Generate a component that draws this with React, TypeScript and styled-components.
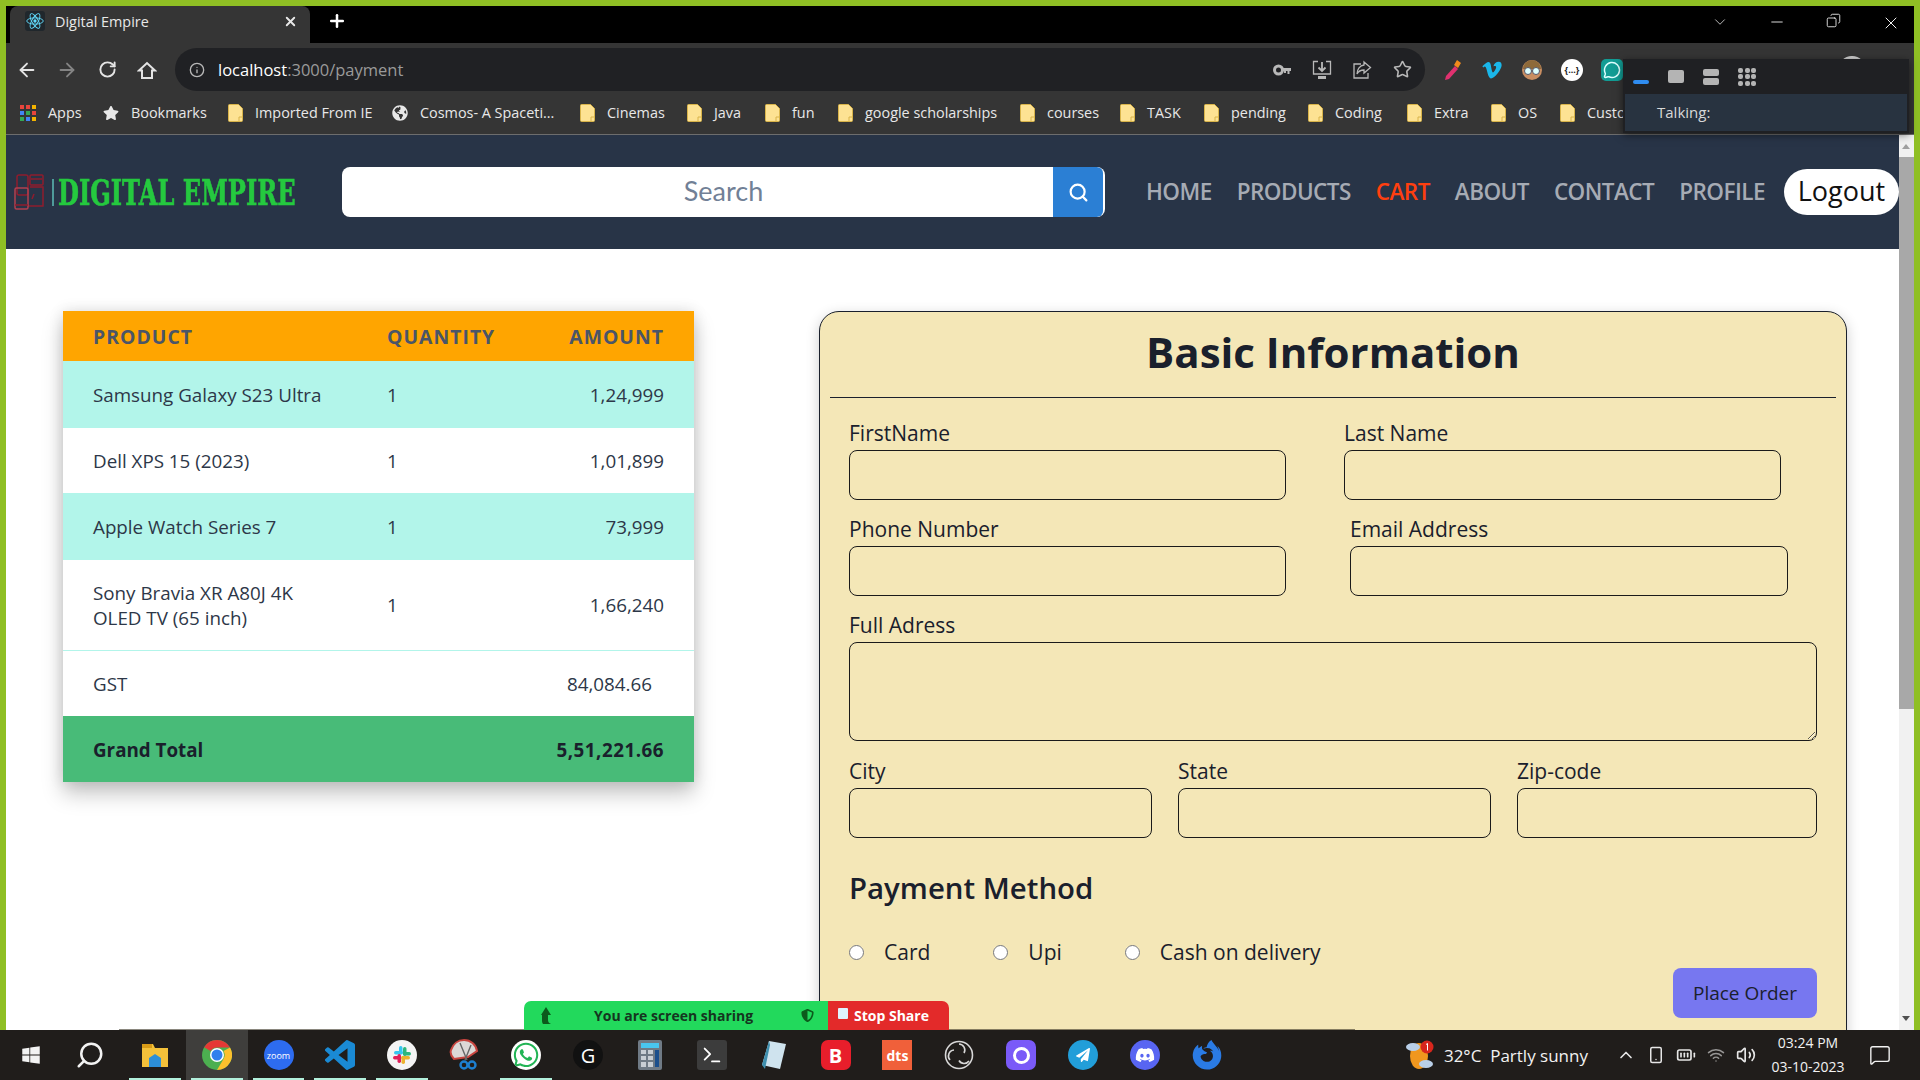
import React from 'react';
import styled, { createGlobalStyle } from 'styled-components';
import {
    ArrowLeft,
    ArrowRight,
    BatteryFull,
    ChevronDown,
    ChevronUp,
    Copy,
    Info,
    MessageCircle,
    MessageSquare,
    Minus,
    Plus,
    RotateCw,
    Search,
    Smartphone,
    Star,
    Terminal,
    Volume2,
    Wifi,
    X,
} from 'lucide-react';
import {
    FaDiscord,
    FaFirefoxBrowser,
    FaGlobeAmericas,
    FaPaperPlane,
    FaShieldAlt,
    FaStar,
    FaVimeoV,
    FaWhatsapp,
    FaWindows,
} from 'react-icons/fa';

const sans = `'Open Sans', 'Noto Sans', sans-serif`;

const GlobalStyle = createGlobalStyle`
    html, body {
        margin: 0;
        overflow: hidden;
        font-family: ${sans};
    }
    * {
        box-sizing: border-box;
    }
`;

const Screen = styled.div`
    position: relative;
    display: flex;
    flex-direction: column;
    width: 100vw;
    height: 100vh;
    overflow: hidden;
    background: #8fbf24;
`;

const Desktop = styled.div`
    display: flex;
    flex: 1;
    flex-direction: column;
    min-height: 0;
    padding: 6px 6px 0;
`;

const TabStrip = styled.div`
    display: flex;
    align-items: flex-end;
    height: 37px;
    padding-left: 4px;
    background: #000;
    color: #e8e8e8;
`;

const Tab = styled.div`
    display: flex;
    align-items: center;
    width: 300px;
    height: 37px;
    padding: 0 12px 7px 15px;
    background: #353535;
    border-radius: 8px 8px 0 0;
    font-size: 14.4px;
`;

const Favicon = styled.span`
    display: flex;
    align-items: center;
    justify-content: center;
    width: 20px;
    height: 20px;
    margin-right: 10px;
    background: #20272c;
    border-radius: 3px;
`;

const TabTitle = styled.span`
    flex: 1;
`;

const NewTab = styled.span`
    display: flex;
    margin: 0 0 6px 17px;
    padding-bottom: 6px;
    color: #fff;
`;

const WindowControls = styled.div`
    display: flex;
    margin-left: auto;
    padding-bottom: 10px;
    margin-right: -5px;
    color: #f0f0f0;
`;

const WindowButton = styled.span`
    display: flex;
    justify-content: center;
    width: 57px;
`;

const Toolbar = styled.div`
    display: flex;
    align-items: center;
    height: 48px;
    padding: 5px 0 0 1px;
    background: #353535;
    color: #e4e4e4;
`;

const ToolButton = styled.span<{ $dim?: boolean }>`
    display: flex;
    align-items: center;
    justify-content: center;
    flex: none;
    width: 40px;
    opacity: ${(p) => (p.$dim ? 0.45 : 1)};
`;

const AddressPill = styled.div`
    display: flex;
    align-items: center;
    width: 1250px;
    height: 43px;
    margin-left: 8px;
    padding: 0 3px 0 14px;
    background: #202124;
    border-radius: 22px;
    color: #b8b8b8;
`;

const AddressText = styled.span`
    flex: 1;
    margin-left: 13px;
    font-size: 16.5px;
    color: #9a9a9a;
    b {
        font-weight: 400;
        color: #fff;
    }
`;

const Extensions = styled.div`
    display: flex;
    margin-left: 7px;
`;

const ExtensionBadge = styled.span<{ $bg: string; $radius?: string }>`
    display: flex;
    align-items: center;
    justify-content: center;
    width: 22px;
    height: 22px;
    background: ${(p) => p.$bg};
    border-radius: ${(p) => p.$radius || '50%'};
    color: #222;
    font-size: 9px;
    font-weight: 700;
`;

const ProfileRing = styled.span`
    width: 28px;
    height: 28px;
    border: 3px solid #d0d0d0;
    border-radius: 50%;
`;

const BookmarkBar = styled.div`
    display: flex;
    align-items: center;
    height: 44px;
    padding-left: 14px;
    background: #353535;
    border-bottom: 1px solid #6d6d6d;
    color: #e8e8e8;
    font-size: 14.4px;
    white-space: nowrap;
    overflow: hidden;
`;

const Bookmark = styled.span<{ $w: number }>`
    display: flex;
    align-items: center;
    flex: none;
    gap: 12px;
    width: ${(p) => p.$w}px;
`;

const AppsGrid = styled.span`
    display: grid;
    grid-template-columns: repeat(3, 4px);
    gap: 2px;
`;

const AppsDot = styled.i<{ $c: string }>`
    width: 4px;
    height: 4px;
    background: ${(p) => p.$c};
`;

const Viewport = styled.div`
    display: flex;
    flex: 1;
    min-height: 0;
`;

const Page = styled.div`
    flex: 1;
    min-width: 0;
    overflow: hidden;
    background: #fff;
`;

const Scrollbar = styled.div`
    display: flex;
    flex-direction: column;
    flex: none;
    width: 15px;
    background: #f1f1f1;
`;

const ScrollArrow = styled.span<{ $down?: boolean }>`
    display: block;
    width: 0;
    height: 0;
    margin: ${(p) => (p.$down ? 'auto 3px 9px' : '9px 3px 8px')};
    border-left: 4.5px solid transparent;
    border-right: 4.5px solid transparent;
    border-bottom: ${(p) => (p.$down ? '0' : '5px solid #a0a0a0')};
    border-top: ${(p) => (p.$down ? '5px solid #505050' : '0')};
`;

const ScrollThumb = styled.div`
    height: 552px;
    background: #a8a8a8;
`;

const Nav = styled.header`
    display: flex;
    align-items: center;
    height: 114px;
    background: #283447;
`;

const Logo = styled.div`
    display: flex;
    align-items: center;
    flex: none;
    width: 336px;
    padding: 0 0 0 8px;
    filter: blur(0.5px);
    svg {
        flex: none;
    }
`;

const LogoRule = styled.span`
    flex: none;
    width: 2px;
    height: 27px;
    margin: 0 4px 0 8px;
    background: #4f9a9a;
`;

const LogoText = styled.span`
    display: inline-block;
    flex: none;
    width: 234px;
    font-family: 'DejaVu Serif', serif;
    font-size: 36px;
    font-weight: 700;
    color: #25c93f;
    white-space: nowrap;
    -webkit-text-stroke: 0.7px #25c93f;
    transform: scaleX(0.67);
    transform-origin: left center;
`;

const SearchBox = styled.div`
    display: flex;
    flex: none;
    width: 763px;
    height: 50px;
    background: #fff;
    border-radius: 8px;
    overflow: hidden;
`;

const SearchField = styled.input`
    flex: 1;
    min-width: 0;
    padding: 0 0 3px 52px;
    border: 0;
    outline: 0;
    background: none;
    font-family: 'Lato', sans-serif;
    font-size: 27px;
    text-align: center;
    &::placeholder {
        color: #718096;
        opacity: 1;
    }
`;

const SearchButton = styled.button`
    display: flex;
    align-items: center;
    justify-content: center;
    width: 50px;
    margin-right: 2px;
    padding: 0;
    border: 0;
    background: #2b7fd4;
    border-radius: 0 6px 6px 0;
    color: #fff;
`;

const NavLinks = styled.nav`
    display: flex;
    align-items: center;
    flex: 1;
    gap: 25px;
    margin-left: 41px;
    padding-bottom: 2px;
`;

const NavLink = styled.a<{ $active?: boolean }>`
    font-size: 22.5px;
    font-weight: 600;
    letter-spacing: -0.55px;
    color: ${(p) => (p.$active ? '#ff3f0f' : '#a6abb4')};
    white-space: nowrap;
`;

const LogoutButton = styled.button`
    flex: none;
    width: 115px;
    height: 46px;
    padding: 0 0 3px;
    border: 0;
    background: #fff;
    border-radius: 23px;
    font-family: ${sans};
    font-size: 27px;
    color: #111;
`;

const Main = styled.main`
    display: flex;
    align-items: flex-start;
    justify-content: space-between;
    padding: 62px 52px 0 57px;
`;

const OrderTable = styled.table`
    flex: none;
    width: 631px;
    border-collapse: collapse;
    table-layout: fixed;
    box-shadow: 0 12px 20px rgba(0, 0, 0, 0.22), 0 0 14px rgba(0, 0, 0, 0.12);
    font-size: 18.8px;
    color: #2d3748;
`;

const HeadRow = styled.tr`
    height: 50px;
    background: #ffa500;
`;

const HeadCell = styled.th<{ $right?: boolean; $w?: number }>`
    width: ${(p) => (p.$w ? `${p.$w}px` : 'auto')};
    padding: 0 ${(p) => (p.$right ? '30px' : '0')} 0 ${(p) => (p.$right ? '0' : '30px')};
    font-size: 19.4px;
    font-weight: 700;
    letter-spacing: 1px;
    text-align: ${(p) => (p.$right ? 'right' : 'left')};
    color: #4a5568;
`;

const BodyRow = styled.tr<{ $h: number; $tint?: boolean; $rule?: boolean }>`
    height: ${(p) => p.$h}px;
    background: ${(p) => (p.$tint ? '#b2f5ea' : '#fff')};
    border-bottom: ${(p) => (p.$rule ? '1px solid #b2f5ea' : '0')};
`;

const TotalRow = styled.tr`
    height: 66px;
    background: #48bb78;
    font-weight: 700;
    color: #1a202c;
    td:last-child {
        letter-spacing: 0.5px;
    }
`;

const Cell = styled.td<{ $right?: boolean; $inset?: number }>`
    padding: 2px ${(p) => (p.$right ? `${p.$inset || 30}px` : '0')} 0 30px;
    line-height: 25px;
    white-space: pre-line;
    text-align: ${(p) => (p.$right ? 'right' : 'left')};
`;

const FormCard = styled.form`
    flex: none;
    width: 1028px;
    padding: 0 10px 60px;
    background: #f4e7b7;
    border: 1px solid #1a202c;
    border-radius: 20px;
    box-shadow: 0 4px 14px rgba(0, 0, 0, 0.2);
    color: #1a202c;
`;

const CardTitle = styled.h1`
    margin: 0;
    padding: 6px 0 11px;
    border-bottom: 1px solid #1a202c;
    font-size: 42px;
    font-weight: 700;
    line-height: 68px;
    text-align: center;
`;

const FormBody = styled.div`
    padding: 23px 19px 0;
`;

const FieldRow = styled.div<{ $cols: string; $gap?: number; $mb?: number }>`
    display: grid;
    grid-template-columns: ${(p) => p.$cols};
    column-gap: ${(p) => p.$gap || 0}px;
    margin-bottom: ${(p) => (p.$mb === undefined ? 17 : p.$mb)}px;
`;

const FieldLabel = styled.label`
    display: block;
    margin-bottom: 5px;
    font-size: 21px;
    line-height: 24px;
`;

const TextInput = styled.input`
    display: block;
    width: 100%;
    height: 50px;
    border: 1px solid #1a1a1a;
    border-radius: 8px;
    background: none;
    outline: 0;
`;

const TextArea = styled.textarea`
    display: block;
    width: 100%;
    height: 99px;
    border: 1px solid #1a1a1a;
    border-radius: 8px;
    background: none;
    outline: 0;
`;

const SectionTitle = styled.h2`
    margin: 30px 0 0;
    font-size: 29.4px;
    font-weight: 600;
    line-height: 40px;
`;

const RadioRow = styled.div`
    display: flex;
    gap: 63px;
    margin-top: 32px;
`;

const RadioLabel = styled.label`
    display: flex;
    align-items: center;
    gap: 20px;
    font-size: 21px;
    line-height: 24px;
`;

const RadioInput = styled.input`
    width: 15px;
    height: 15px;
    margin: 0;
`;

const PlaceOrder = styled.button`
    display: block;
    width: 144px;
    height: 50px;
    margin: 4px 0 0 auto;
    padding: 0;
    border: 0;
    border-radius: 8px;
    background: #7777f0;
    font-family: ${sans};
    font-size: 19px;
    color: #1a202c;
`;

const Taskbar = styled.footer`
    position: relative;
    display: flex;
    align-items: center;
    flex: none;
    height: 50px;
    background: #201d1b;
    color: #f2f2f2;
    &::before {
        content: '';
        position: absolute;
        left: 119px;
        top: -1px;
        width: 1236px;
        height: 1px;
        background: rgba(60, 55, 40, 0.6);
    }
`;

const TaskSlot = styled.span<{ $open?: boolean; $active?: boolean }>`
    position: relative;
    display: flex;
    align-items: center;
    justify-content: center;
    flex: none;
    width: 61.9px;
    height: 50px;
    background: ${(p) => (p.$active ? '#3f3e3c' : 'transparent')};
    &::after {
        content: '';
        display: ${(p) => (p.$open ? 'block' : 'none')};
        position: absolute;
        left: 5px;
        right: 5px;
        bottom: 0;
        height: 2px;
        background: #b2f0dc;
    }
`;

const Disc = styled.span<{ $bg: string; $color?: string; $radius?: string; $w?: number }>`
    display: flex;
    align-items: center;
    justify-content: center;
    width: ${(p) => p.$w || 30}px;
    height: 30px;
    background: ${(p) => p.$bg};
    border-radius: ${(p) => p.$radius || '50%'};
    color: ${(p) => p.$color || '#fff'};
    font-size: 20px;
    font-weight: 700;
    overflow: hidden;
`;

const DiscLabel = styled.span<{ $size: number; $weight?: number }>`
    font-size: ${(p) => p.$size}px;
    font-weight: ${(p) => p.$weight || 400};
`;

const Ring = styled.span`
    width: 17px;
    height: 17px;
    border: 3px solid #fff;
    border-radius: 50%;
`;

const Tray = styled.div`
    display: flex;
    align-items: center;
    margin-left: auto;
    padding-right: 12px;
`;

const Weather = styled.span`
    display: flex;
    align-items: center;
    font-size: 17px;
    white-space: nowrap;
`;

const TrayIcons = styled.span`
    display: flex;
    align-items: center;
    gap: 11px;
    margin-left: 28px;
    color: #e6e6e6;
`;

const Clock = styled.span`
    width: 88px;
    margin-left: 8px;
    font-size: 14px;
    line-height: 24px;
    text-align: center;
`;

const Notification = styled.span`
    display: flex;
    justify-content: center;
    width: 56px;
`;

const ZoomWidget = styled.aside`
    position: absolute;
    top: 59px;
    left: 1623px;
    width: 286px;
    height: 74px;
    padding: 0 2px 2px;
    background: #1f2023;
    box-shadow: 0 2px 8px rgba(0, 0, 0, 0.5);
`;

const ZoomViews = styled.div`
    display: flex;
    align-items: center;
    gap: 19px;
    height: 35px;
    padding-left: 8px;
`;

const ViewGlyph = styled.span<{ $c?: string; $w: number; $h: number }>`
    display: block;
    width: ${(p) => p.$w}px;
    height: ${(p) => p.$h}px;
    margin-top: ${(p) => (p.$c ? '10px' : '0')};
    background: ${(p) => p.$c || '#b4b4b4'};
    border-radius: 2px;
`;

const ViewStack = styled.span`
    display: grid;
    gap: 2px;
`;

const ViewGrid = styled.span`
    display: grid;
    grid-template-columns: repeat(3, 5px);
    gap: 1.5px;
`;

const TalkingBar = styled.div`
    height: 37px;
    padding-left: 32px;
    background: #283340;
    font-size: 15px;
    line-height: 37px;
    color: #d8d8d8;
`;

const ShareBar = styled.div`
    position: absolute;
    left: 524px;
    top: 1001px;
    display: flex;
    width: 425px;
    height: 29px;
    border-radius: 7px 7px 0 0;
    overflow: hidden;
    font-size: 14px;
    font-weight: 700;
`;

const ShareNotice = styled.div`
    display: flex;
    align-items: center;
    width: 304px;
    padding: 0 14px 0 16px;
    background: #22d95c;
    color: #15351f;
`;

const ShareText = styled.span`
    flex: 1;
    padding-left: 42px;
    white-space: nowrap;
`;

const StopShare = styled.div`
    display: flex;
    align-items: center;
    flex: 1;
    gap: 6px;
    padding-left: 10px;
    background: #e32a2a;
    color: #fff;
`;

const StopGlyph = styled.span`
    width: 10px;
    height: 11px;
    margin-bottom: 5px;
    background: #dff4ff;
    border-radius: 1px;
`;

const FolderIcon = () => (
    <svg width="15" height="18" viewBox="0 0 15 18">
        <path d="M.5 1.5a1 1 0 0 1 1-1h9l4 4v12a1 1 0 0 1-1 1h-12a1 1 0 0 1-1-1z" fill="#fde293" stroke="#d9b44a" />
        <path d="M11 17v-4h3.5" fill="none" stroke="#d9b44a" />
    </svg>
);

const ReactIcon = () => (
    <svg width="18" height="18" viewBox="-12 -12 24 24" fill="none" stroke="#61dafb" strokeWidth="1.2">
        <circle r="2.2" fill="#61dafb" stroke="none" />
        <ellipse rx="11" ry="4.2" />
        <ellipse rx="11" ry="4.2" transform="rotate(60)" />
        <ellipse rx="11" ry="4.2" transform="rotate(120)" />
    </svg>
);

const DevicesLogo = () => (
    <svg width="30" height="36" viewBox="0 0 30 36" fill="none" stroke="#8e1c2e" strokeWidth="1.5">
        <rect x="3" y="1" width="11" height="20" rx="2" />
        <rect x="16" y="1" width="13" height="10" rx="1" />
        <path d="M17 5h11M16 13h13v19H14" />
        <rect x="1" y="14" width="13" height="21" rx="1.5" stroke="#b04050" />
        <path d="M1 31h13M20 20l-2 5" />
    </svg>
);

const HomeOutline = () => (
    <svg width="20" height="20" viewBox="0 0 20 20" fill="none" stroke="currentColor" strokeWidth="2">
        <path d="M2 10.500L10 3l8 7.500h-3V18H5v-7.500z" />
    </svg>
);

const KeyIcon = () => (
    <svg width="18" height="12" viewBox="0 0 18 12" fill="currentColor">
        <path fillRule="evenodd" d="M5.500.500a5.500 5.500 0 1 0 0 11 5.500 5.500 0 0 0 0-11zm0 3a2.500 2.500 0 1 1 0 5 2.500 2.500 0 0 1 0-5z" />
        <path d="M10 4h8v3h-1.500v3h-2V7H13v2h-2V7h-1z" />
    </svg>
);

const InstallIcon = () => (
    <svg width="20" height="20" viewBox="0 0 20 20" fill="none" stroke="currentColor" strokeWidth="1.3">
        <path d="M6 1.500H1.500V14h17V1.500H14" />
        <path d="M10 2v9M6.500 7.500L10 11l3.500-3.500" strokeWidth="1.800" />
        <path d="M6 17.500h8" strokeWidth="3" />
    </svg>
);

const ShareBoxIcon = () => (
    <svg width="20" height="20" viewBox="0 0 20 20" fill="none" stroke="currentColor" strokeWidth="1.3">
        <path d="M9 4H2v14h14v-5" />
        <path d="M12 2l6.500 5.500L12 13v-3C9 10 6.500 11 5 14c0-5 3-8.500 7-9z" />
    </svg>
);

const DropperIcon = () => (
    <svg width="20" height="22" viewBox="0 0 20 22">
        <path d="M13 7l3 3-9 10-4 1 1-4z" fill="#e0316f" />
        <path d="M12 6l3-5 4 3-3 5z" fill="#f28a1c" />
    </svg>
);

const FaceIcon = () => (
    <svg width="22" height="22" viewBox="0 0 22 22">
        <circle cx="11" cy="11" r="10" fill="#c98e62" />
        <path d="M2 10a9 9 0 0 1 18 0z" fill="#8e6a3a" />
        <circle cx="7" cy="12" r="3.5" fill="#dff" stroke="#556" />
        <circle cx="15" cy="12" r="3.5" fill="#dff" stroke="#556" />
    </svg>
);

const FilesIcon = () => (
    <svg width="28" height="28" viewBox="0 0 28 28">
        <path d="M1 3h11l2 4h13v19H1z" fill="#f3c13a" />
        <path d="M1 3h10v4H1z" fill="#d89b17" />
        <path d="M8 26v-9l6-4 6 4v9z" fill="#2c8fd8" />
    </svg>
);

const ChromeIcon = () => (
    <svg width="30" height="30" viewBox="0 0 30 30">
        <circle cx="15" cy="15" r="15" fill="#4caf50" />
        <path d="M15 0a15 15 0 0 1 13 7.5H15A7.5 7.5 0 0 0 8.5 11L2.2 7.3A15 15 0 0 1 15 0z" fill="#e53935" />
        <path d="M28 7.5A15 15 0 0 1 15 30l6.5-11A7.5 7.5 0 0 0 21.500 11z" fill="#fbc02d" />
        <circle cx="15" cy="15" r="7" fill="#fff" />
        <circle cx="15" cy="15" r="5.500" fill="#2f80ed" />
    </svg>
);

const VsCodeIcon = () => (
    <svg width="30" height="30" viewBox="0 0 24 24" fill="#1a8ad4">
        <path d="M23.15 2.587L18.21.21a1.494 1.494 0 0 0-1.705.29l-9.46 8.63-4.12-3.128a.999.999 0 0 0-1.276.057L.327 7.261A1 1 0 0 0 .326 8.74L3.899 12 .326 15.26a1 1 0 0 0 .001 1.479L1.65 17.94a.999.999 0 0 0 1.276.057l4.12-3.128 9.46 8.63a1.492 1.492 0 0 0 1.704.29l4.942-2.377A1.5 1.5 0 0 0 24 20.06V3.939a1.5 1.5 0 0 0-.85-1.352zm-5.146 14.861L10.826 12l7.178-5.448v10.896z" />
    </svg>
);

const SlackIcon = () => (
    <svg width="30" height="30" viewBox="0 0 30 30">
        <circle cx="15" cy="15" r="15" fill="#f4f4f4" />
        <rect x="7" y="11" width="9" height="3.500" rx="1.700" fill="#36c5f0" />
        <rect x="12" y="6" width="3.500" height="8" rx="1.700" fill="#36c5f0" />
        <rect x="16" y="7" width="3.500" height="9" rx="1.700" fill="#2eb67d" />
        <rect x="16" y="12" width="8" height="3.500" rx="1.700" fill="#2eb67d" />
        <rect x="14" y="16" width="9" height="3.500" rx="1.700" fill="#ecb22e" />
        <rect x="14.500" y="16" width="3.500" height="8" rx="1.700" fill="#ecb22e" />
        <rect x="10.500" y="14" width="3.500" height="9" rx="1.700" fill="#e01e5a" />
        <rect x="6" y="16" width="8" height="3.500" rx="1.700" fill="#e01e5a" />
    </svg>
);

const CalculatorIcon = () => (
    <svg width="24" height="30" viewBox="0 0 24 30">
        <rect width="24" height="30" rx="2" fill="#6f7a85" />
        <rect x="3" y="3" width="18" height="5" fill="#49c6ef" />
        <rect x="3" y="10" width="5" height="4" fill="#c8ced4" />
        <rect x="10" y="10" width="5" height="4" fill="#c8ced4" />
        <rect x="3" y="16" width="5" height="4" fill="#c8ced4" />
        <rect x="10" y="16" width="5" height="4" fill="#c8ced4" />
        <rect x="3" y="22" width="5" height="5" fill="#c8ced4" />
        <rect x="10" y="22" width="5" height="5" fill="#c8ced4" />
        <rect x="17" y="10" width="4" height="17" fill="#1c4f8c" />
    </svg>
);

const NotepadIcon = () => (
    <svg width="26" height="30" viewBox="0 0 26 30">
        <path d="M8 1l17 3-6 25-18-4z" fill="#cfe3ee" />
        <path d="M8 1L1 25l3 4 5-24z" fill="#3f8fae" />
    </svg>
);

const ObsIcon = () => (
    <svg width="30" height="30" viewBox="0 0 30 30" fill="none" stroke="#d8d8d8" strokeWidth="1.6">
        <circle cx="15" cy="15" r="13.500" />
        <path d="M15 4a6 6 0 0 1 5 9M25 21a6 6 0 0 1-10-.5M6 20a6 6 0 0 1 4-10" />
    </svg>
);

const SnipIcon = () => (
    <svg width="30" height="32" viewBox="0 0 30 32" fill="none">
        <path d="M15 1a13 13 0 0 1 13 11l-9 6-14 2C2 17 1 14 2 11 4 5 9 1 15 1z" fill="#dcd8d6" stroke="#c8453f" strokeWidth="2" />
        <path d="M11 4l7 17M22 6l-6 15" stroke="#666" strokeWidth="1.400" />
        <circle cx="15" cy="26" r="3.500" stroke="#1d7fd0" strokeWidth="2.400" />
        <circle cx="23" cy="26" r="3.500" stroke="#1d7fd0" strokeWidth="2.400" />
    </svg>
);

const SharePointer = () => (
    <svg width="12" height="18" viewBox="0 0 12 18" fill="#0c5a1c">
        <path d="M6 0l5 8H8v5c0 2 1 3 3 4H3c-1-1-1-3-1-4V8H1z" />
    </svg>
);

const WeatherIcon = () => (
    <svg width="30" height="30" viewBox="0 0 30 30">
        <ellipse cx="14" cy="16" rx="9" ry="13" fill="#f0971e" />
        <ellipse cx="8" cy="7" rx="7" ry="4" fill="#b9cfe8" />
        <ellipse cx="21" cy="24" rx="7" ry="4" fill="#b9cfe8" />
        <circle cx="22" cy="7" r="6.500" fill="#d8261c" />
        <path d="M21 4.500l1.500-1v7" stroke="#fff" fill="none" />
    </svg>
);

const bookmarks = [
    { label: 'Bookmarks', w: 125, icon: <FaStar size={16} /> },
    { label: 'Imported From IE', w: 164, icon: <FolderIcon /> },
    { label: 'Cosmos- A Spaceti...', w: 188, icon: <FaGlobeAmericas size={16} /> },
    { label: 'Cinemas', w: 107, icon: <FolderIcon /> },
    { label: 'Java', w: 78, icon: <FolderIcon /> },
    { label: 'fun', w: 73, icon: <FolderIcon /> },
    { label: 'google scholarships', w: 182, icon: <FolderIcon /> },
    { label: 'courses', w: 100, icon: <FolderIcon /> },
    { label: 'TASK', w: 84, icon: <FolderIcon /> },
    { label: 'pending', w: 104, icon: <FolderIcon /> },
    { label: 'Coding', w: 99, icon: <FolderIcon /> },
    { label: 'Extra', w: 84, icon: <FolderIcon /> },
    { label: 'OS', w: 69, icon: <FolderIcon /> },
    { label: 'Custo', w: 70, icon: <FolderIcon /> },
];

const appDots = ['#e8453c', '#e8453c', '#f4b400', '#4285f4', '#34a853', '#e8453c', '#34a853', '#4285f4', '#f4b400'];

const navItems = ['HOME', 'PRODUCTS', 'CART', 'ABOUT', 'CONTACT', 'PROFILE'];

const orderLines = [
    { name: 'Samsung Galaxy S23 Ultra', amount: '1,24,999', h: 67, tint: true },
    { name: 'Dell XPS 15 (2023)', amount: '1,01,899', h: 65 },
    { name: 'Apple Watch Series 7', amount: '73,999', h: 67, tint: true },
    { name: 'Sony Bravia XR A80J 4K\nOLED TV (65 inch)', amount: '1,66,240', h: 90, rule: true },
];

const taskItems: { icon: React.ReactNode; open?: boolean; active?: boolean }[] = [
    { icon: <FaWindows size={20} /> },
    { icon: <Search size={30} strokeWidth={2} style={{ transform: 'scaleX(-1) translateX(3px)' }} /> },
    { icon: <FilesIcon />, open: true },
    { icon: <ChromeIcon />, open: true, active: true },
    { icon: <Disc $bg="#2d6cf0"><DiscLabel $size={9}>zoom</DiscLabel></Disc>, open: true },
    { icon: <VsCodeIcon />, open: true },
    { icon: <SlackIcon />, open: true },
    { icon: <SnipIcon /> },
    { icon: <Disc $bg="#fff" $color="#22b455"><FaWhatsapp size={28} /></Disc>, open: true },
    { icon: <Disc $bg="#111"><DiscLabel $size={20} $weight={400}>G</DiscLabel></Disc> },
    { icon: <CalculatorIcon /> },
    { icon: <Disc $bg="#3c3c3c" $radius="3px"><Terminal size={22} /></Disc> },
    { icon: <NotepadIcon /> },
    { icon: <Disc $bg="#e81e2b" $radius="7px">B</Disc> },
    { icon: <Disc $bg="#f0603a" $radius="0"><DiscLabel $size={14} $weight={700}>dts</DiscLabel></Disc> },
    { icon: <ObsIcon /> },
    { icon: <Disc $bg="#7a5af8" $radius="7px"><Ring /></Disc> },
    { icon: <Disc $bg="#229ed9"><FaPaperPlane size={14} /></Disc> },
    { icon: <Disc $bg="#5865f2"><FaDiscord size={20} /></Disc> },
    { icon: <FaFirefoxBrowser size={30} color="#2a7be4" /> },
];

const Field: React.FunctionComponent<{ label: string }> = ({ label }) => (
    <div>
        <FieldLabel>{label}</FieldLabel>
        <TextInput type="text" />
    </div>
);

const App = () => {
    return (
        <Screen>
            <GlobalStyle />
            <Desktop>
                <TabStrip>
                    <Tab>
                        <Favicon>
                            <ReactIcon />
                        </Favicon>
                        <TabTitle>Digital Empire</TabTitle>
                        <X size={15} strokeWidth={3} />
                    </Tab>
                    <NewTab>
                        <Plus size={20} strokeWidth={3} />
                    </NewTab>
                    <WindowControls>
                        <WindowButton>
                            <ChevronDown size={18} strokeWidth={1} />
                        </WindowButton>
                        <WindowButton>
                            <Minus size={18} strokeWidth={1.2} />
                        </WindowButton>
                        <WindowButton>
                            <Copy size={15} strokeWidth={1.4} style={{ transform: 'scaleX(-1)' }} />
                        </WindowButton>
                        <WindowButton>
                            <X size={20} strokeWidth={1.2} />
                        </WindowButton>
                    </WindowControls>
                </TabStrip>
                <Toolbar>
                    <ToolButton>
                        <ArrowLeft size={22} />
                    </ToolButton>
                    <ToolButton $dim>
                        <ArrowRight size={22} />
                    </ToolButton>
                    <ToolButton>
                        <RotateCw size={19} strokeWidth={2.4} />
                    </ToolButton>
                    <ToolButton>
                        <HomeOutline />
                    </ToolButton>
                    <AddressPill>
                        <Info size={16} />
                        <AddressText>
                            <b>localhost</b>:3000/payment
                        </AddressText>
                        <ToolButton>
                            <KeyIcon />
                        </ToolButton>
                        <ToolButton>
                            <InstallIcon />
                        </ToolButton>
                        <ToolButton>
                            <ShareBoxIcon />
                        </ToolButton>
                        <ToolButton>
                            <Star size={19} />
                        </ToolButton>
                    </AddressPill>
                    <Extensions>
                        <ToolButton>
                            <DropperIcon />
                        </ToolButton>
                        <ToolButton>
                            <FaVimeoV size={22} color="#1ab7ea" />
                        </ToolButton>
                        <ToolButton>
                            <FaceIcon />
                        </ToolButton>
                        <ToolButton>
                            <ExtensionBadge $bg="#fff">{'{...}'}</ExtensionBadge>
                        </ToolButton>
                        <ToolButton>
                            <ExtensionBadge $bg="#129c94" $radius="5px">
                                <MessageCircle size={18} color="#dff" />
                            </ExtensionBadge>
                        </ToolButton>
                        <ToolButton />
                        <ToolButton>
                            <ExtensionBadge $bg="#a84a22" />
                        </ToolButton>
                        <ToolButton />
                        <ToolButton />
                        <ToolButton />
                        <ToolButton>
                            <ProfileRing />
                        </ToolButton>
                    </Extensions>
                </Toolbar>
                <BookmarkBar>
                    <Bookmark $w={83}>
                        <AppsGrid>
                            {appDots.map((c, i) => (
                                <AppsDot key={i} $c={c} />
                            ))}
                        </AppsGrid>
                        Apps
                    </Bookmark>
                    {bookmarks.map((b) => (
                        <Bookmark key={b.label} $w={b.w}>
                            {b.icon}
                            {b.label}
                        </Bookmark>
                    ))}
                </BookmarkBar>
                <Viewport>
                    <Page>
                        <Nav>
                            <Logo>
                                <DevicesLogo />
                                <LogoRule />
                                <LogoText>DIGITAL EMPIRE</LogoText>
                            </Logo>
                            <SearchBox>
                                <SearchField placeholder="Search" />
                                <SearchButton>
                                    <Search size={21} strokeWidth={2.5} />
                                </SearchButton>
                            </SearchBox>
                            <NavLinks>
                                {navItems.map((item) => (
                                    <NavLink key={item} $active={item === 'CART'}>
                                        {item}
                                    </NavLink>
                                ))}
                            </NavLinks>
                            <LogoutButton>Logout</LogoutButton>
                        </Nav>
                        <Main>
                            <OrderTable>
                                <thead>
                                    <HeadRow>
                                        <HeadCell $w={294}>PRODUCT</HeadCell>
                                        <HeadCell $w={165}>QUANTITY</HeadCell>
                                        <HeadCell $right>AMOUNT</HeadCell>
                                    </HeadRow>
                                </thead>
                                <tbody>
                                    {orderLines.map((line) => (
                                        <BodyRow key={line.name} $h={line.h} $tint={line.tint} $rule={line.rule}>
                                            <Cell>{line.name}</Cell>
                                            <Cell>1</Cell>
                                            <Cell $right>{line.amount}</Cell>
                                        </BodyRow>
                                    ))}
                                    <BodyRow $h={66}>
                                        <Cell>GST</Cell>
                                        <Cell />
                                        <Cell $right $inset={42}>
                                            84,084.66
                                        </Cell>
                                    </BodyRow>
                                    <TotalRow>
                                        <Cell>Grand Total</Cell>
                                        <Cell />
                                        <Cell $right>5,51,221.66</Cell>
                                    </TotalRow>
                                </tbody>
                            </OrderTable>
                            <FormCard>
                                <CardTitle>Basic Information</CardTitle>
                                <FormBody>
                                    <FieldRow $cols="437px 437px" $gap={58}>
                                        <Field label="FirstName" />
                                        <Field label="Last Name" />
                                    </FieldRow>
                                    <FieldRow $cols="437px 438px" $gap={64}>
                                        <Field label="Phone Number" />
                                        <Field label="Email Address" />
                                    </FieldRow>
                                    <FieldRow $cols="1fr" $mb={18}>
                                        <div>
                                            <FieldLabel>Full Adress</FieldLabel>
                                            <TextArea />
                                        </div>
                                    </FieldRow>
                                    <FieldRow $cols="303px 313px 300px" $gap={26} $mb={0}>
                                        <Field label="City" />
                                        <Field label="State" />
                                        <Field label="Zip-code" />
                                    </FieldRow>
                                    <SectionTitle>Payment Method</SectionTitle>
                                    <RadioRow>
                                        <RadioLabel>
                                            <RadioInput type="radio" name="pay" />
                                            Card
                                        </RadioLabel>
                                        <RadioLabel>
                                            <RadioInput type="radio" name="pay" />
                                            Upi
                                        </RadioLabel>
                                        <RadioLabel>
                                            <RadioInput type="radio" name="pay" />
                                            Cash on delivery
                                        </RadioLabel>
                                    </RadioRow>
                                    <PlaceOrder type="button">Place Order</PlaceOrder>
                                </FormBody>
                            </FormCard>
                        </Main>
                    </Page>
                    <Scrollbar>
                        <ScrollArrow />
                        <ScrollThumb />
                        <ScrollArrow $down />
                    </Scrollbar>
                </Viewport>
            </Desktop>
            <Taskbar>
                {taskItems.map((t, i) => (
                    <TaskSlot key={i} $open={t.open} $active={t.active}>
                        {t.icon}
                    </TaskSlot>
                ))}
                <Tray>
                    <Weather>
                        <WeatherIcon />
                        &nbsp;&nbsp;32°C&nbsp;&nbsp;Partly sunny
                    </Weather>
                    <TrayIcons>
                        <ChevronUp size={20} />
                        <Smartphone size={18} />
                        <BatteryFull size={20} />
                        <Wifi size={18} opacity={0.6} />
                        <Volume2 size={20} />
                    </TrayIcons>
                    <Clock>
                        03:24 PM
                        <br />
                        03-10-2023
                    </Clock>
                    <Notification>
                        <MessageSquare size={22} strokeWidth={1.5} />
                    </Notification>
                </Tray>
            </Taskbar>
            <ZoomWidget>
                <ZoomViews>
                    <ViewGlyph $c="#2f8cf0" $w={16} $h={4} />
                    <ViewGlyph $w={16} $h={13} />
                    <ViewStack>
                        <ViewGlyph $w={16} $h={7} />
                        <ViewGlyph $w={16} $h={7} />
                    </ViewStack>
                    <ViewGrid>
                        {Array.from({ length: 9 }).map((_, i) => (
                            <ViewGlyph key={i} $w={5} $h={5} />
                        ))}
                    </ViewGrid>
                </ZoomViews>
                <TalkingBar>Talking:</TalkingBar>
            </ZoomWidget>
            <ShareBar>
                <ShareNotice>
                    <SharePointer />
                    <ShareText>You are screen sharing</ShareText>
                    <FaShieldAlt size={13} color="#0c5a1c" />
                </ShareNotice>
                <StopShare>
                    <StopGlyph />
                    Stop Share
                </StopShare>
            </ShareBar>
        </Screen>
    );
};

export default App;
